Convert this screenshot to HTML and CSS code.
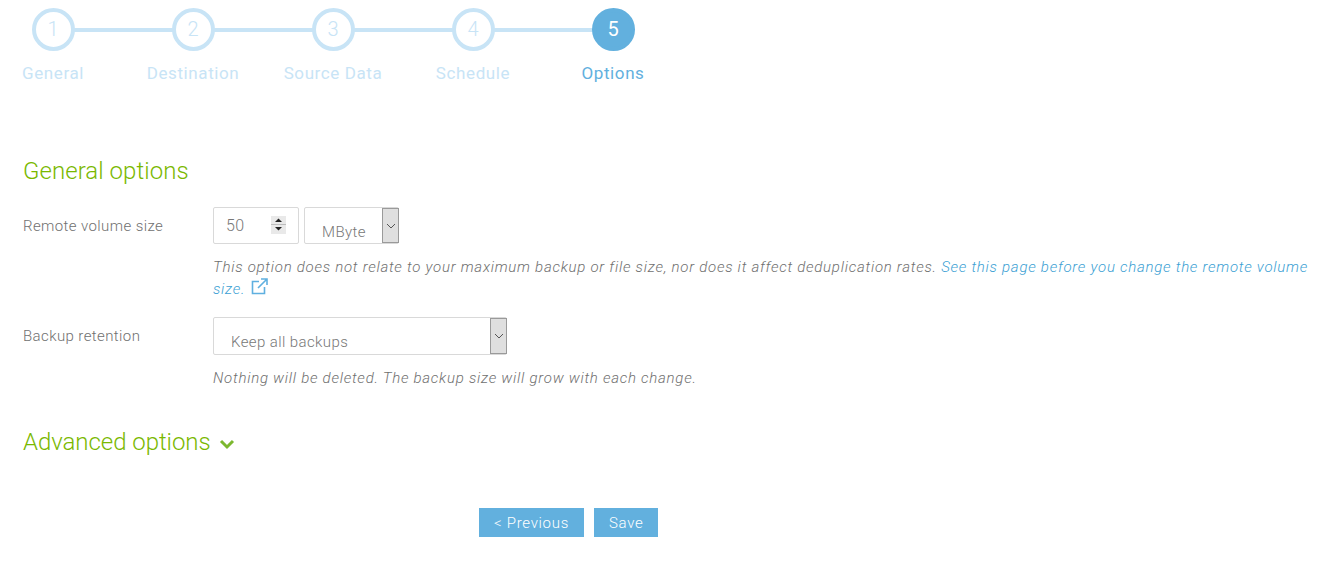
FILE: index.html
```html
<!DOCTYPE html>
<html lang="en">
<head>
<meta charset="utf-8">
<title>Options</title>
<link rel="stylesheet" href="styles.css">
</head>
<body>
<ol class="steps">
  <li class="step"><span class="dot">1</span><span class="step-label">General</span></li>
  <li class="step"><span class="dot">2</span><span class="step-label">Destination</span></li>
  <li class="step"><span class="dot">3</span><span class="step-label">Source Data</span></li>
  <li class="step"><span class="dot">4</span><span class="step-label">Schedule</span></li>
  <li class="step active"><span class="dot">5</span><span class="step-label">Options</span></li>
</ol>
<main class="content">
  <h2 class="section-title">General options</h2>
  <div class="row">
    <label class="row-label">Remote volume size</label>
    <div class="row-body">
      <div class="controls">
        <div class="number">
          <span class="number-value">50</span>
          <span class="spinner">
            <svg width="15" height="18" viewBox="0 0 15 18"><rect width="15" height="18" fill="#e9e9e9"/><rect x="0" y="8" width="15" height="1" fill="#bdbdbd"/><path d="M4 6l3.5-3.5L11 6z" fill="#222"/><path d="M4 11l3.5 3.5L11 11z" fill="#222"/></svg>
          </span>
        </div>
        <div class="select select-unit">
          <span class="select-value">MByte</span>
          <span class="select-arrow"><svg width="10" height="6" viewBox="0 0 10 6"><path d="M1 1l4 4 4-4" fill="none" stroke="#555" stroke-width="1"/></svg></span>
        </div>
      </div>
      <p class="hint">This option does not relate to your maximum backup or file size, nor does it affect deduplication rates. <a class="link" href="#">See this page before you change the remote volume</a> <a class="link" href="#">size.</a> <svg class="ext" width="17" height="17" viewBox="0 0 17 17"><path d="M8 3.5H1.5v12h12V9" fill="none" stroke="#5fb0e0" stroke-width="1.6"/><path d="M10 1h6v6M15.5 1.5L7 10" fill="none" stroke="#5fb0e0" stroke-width="1.6"/></svg></p>
    </div>
  </div>
  <div class="row row-retention">
    <label class="row-label">Backup retention</label>
    <div class="row-body">
      <div class="select select-retention">
        <span class="select-value">Keep all backups</span>
        <span class="select-arrow"><svg width="10" height="6" viewBox="0 0 10 6"><path d="M1 1l4 4 4-4" fill="none" stroke="#555" stroke-width="1"/></svg></span>
      </div>
      <p class="hint">Nothing will be deleted. The backup size will grow with each change.</p>
    </div>
  </div>
  <h2 class="section-title advanced">Advanced options <svg class="chev" width="16" height="11" viewBox="0 0 16 11"><path d="M2 2l6 6 6-6" fill="none" stroke="#7cb82f" stroke-width="3"/></svg></h2>
  <div class="actions">
    <button class="btn" type="button">&lt; Previous</button>
    <button class="btn" type="button">Save</button>
  </div>
</main>
</body>
</html>
```
FILE: styles.css
```css
* { box-sizing: border-box; }
html, body { margin: 0; padding: 0; background: #fff; }
body {
  height: 581px;
  overflow: hidden;
  font-family: Roboto, "Liberation Sans", sans-serif;
  font-weight: 300;
  color: #666;
}
.steps {
  display: flex;
  gap: 40px;
  list-style: none;
  margin: 0;
  padding: 8px 0 0 3px;
}
.step {
  position: relative;
  width: 100px;
  display: flex;
  flex-direction: column;
  align-items: center;
}
.step:not(:last-child)::after {
  content: "";
  position: absolute;
  left: 50%;
  top: 20px;
  width: 140px;
  height: 4px;
  background: #c8e4f6;
}
.dot {
  position: relative;
  z-index: 1;
  width: 43px;
  height: 43px;
  border: 4px solid #c8e4f6;
  border-radius: 50%;
  background: #fff;
  color: #c8e4f6;
  font-size: 20px;
  line-height: 35px;
  text-align: center;
}
.step-label {
  margin-top: 11px;
  font-size: 17px;
  line-height: 22px;
  letter-spacing: 0.6px;
  font-weight: 400;
  color: #c8e4f6;
  white-space: nowrap;
}
.active .dot { background: #62b0de; border-color: #62b0de; color: #fff; font-weight: 400; }
.active .step-label { color: #62b0de; font-weight: 400; }
.content { padding: 72px 10px 0 23px; }
.section-title {
  margin: 0;
  font-size: 24px;
  line-height: 30px;
  font-weight: 300;
  letter-spacing: 0.05px;
  color: #7ab800;
}
.row {
  display: flex;
  margin-top: 21px;
}
.row-label {
  width: 190px;
  flex: none;
  padding-top: 10px;
  font-size: 15px;
  line-height: 18px;
  letter-spacing: 0.4px;
  color: #707070;
}
.row-body { flex: 1; min-width: 0; }
.controls { display: flex; gap: 5px; }
.number, .select {
  position: relative;
  height: 37px;
  border: 1px solid #d9d9d9;
  border-radius: 2px;
  background: #fff;
  font-size: 15px;
  letter-spacing: 0.4px;
  color: #777;
}
.number { width: 86px; padding: 8px 12px; line-height: 20px; font-size: 16px; }
.spinner {
  position: absolute;
  left: 57px;
  top: 8px;
  display: flex;
}
.select-unit { width: 95px; }
.select-retention { width: 294px; height: 38px; }
.select-value {
  position: absolute;
  left: 17px;
  bottom: 1px;
  line-height: 20px;
}
.select-retention .select-value { bottom: 2px; }
.select-arrow {
  position: absolute;
  right: -1px;
  top: 0;
  bottom: 0;
  width: 17px;
  display: flex;
  align-items: center;
  justify-content: center;
  background: #dfdfdf;
  border: 1px solid #9a9a9a;
}
.hint {
  margin: 13px 0 0;
  font-size: 15px;
  line-height: 21px;
  letter-spacing: 0.74px;
  font-style: italic;
  color: #707070;
}
.link { color: #3c9fd4; text-decoration: none; }
.ext { vertical-align: -1px; margin-left: 1px; }
.row-retention { margin-top: 17px; }
.advanced { margin-top: 38px; letter-spacing: -0.05px; }
.chev { margin-left: 3px; }
.actions {
  display: flex;
  justify-content: flex-start;
  gap: 10px;
  margin: 51px 0 0 456px;
}
.btn {
  height: 29px;
  padding: 0 15px;
  border: 0;
  background: #62b0de;
  color: #fff;
  font-family: inherit;
  font-weight: 300;
  font-size: 15px;
  letter-spacing: 0.7px;
}
```
